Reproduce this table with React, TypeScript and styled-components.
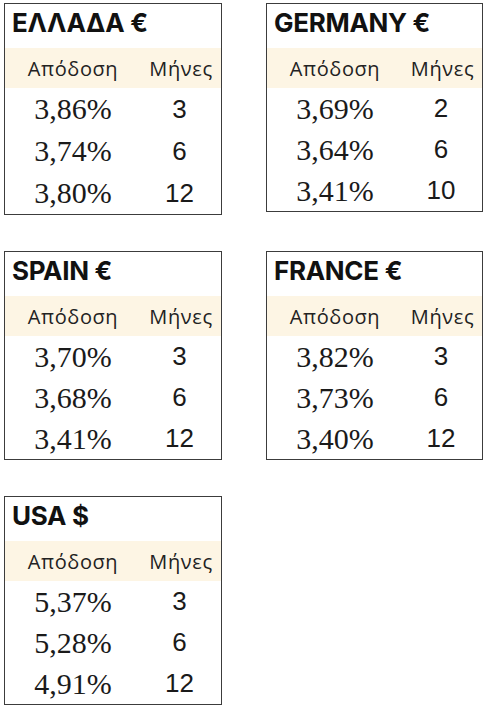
import styled, { createGlobalStyle } from 'styled-components';

const GlobalStyle = createGlobalStyle`
  html, body {
    margin: 0;
    padding: 0;
    background: #ffffff;
  }
`;

const Page = styled.div`
  display: grid;
  grid-template-columns: 218px 217px;
  column-gap: 44px;
  row-gap: 36px;
  align-items: start;
  padding: 3px 0 0 4px;
`;

const Card = styled.div`
  border: 1px solid #3c3c3c;
  background: #ffffff;
  display: flex;
  flex-direction: column;
`;

const Title = styled.div`
  height: 44px;
  box-sizing: border-box;
  display: flex;
  align-items: center;
  padding: 0 0 7px 7px;
  font-family: Inter, "Liberation Sans", sans-serif;
  font-weight: 700;
  font-size: 26px;
  letter-spacing: -0.3px;
  color: #111111;
`;

const Row = styled.div<{ $h: number; $head?: boolean }>`
  display: grid;
  grid-template-columns: 136px 1fr;
  align-items: center;
  height: ${(p) => p.$h}px;
  background: ${(p) => (p.$head ? '#fdf5e4' : 'transparent')};
`;

const HeadCell = styled.div`
  text-align: center;
  font-family: "Open Sans", "Noto Sans", sans-serif;
  font-size: 20px;
  letter-spacing: 0.6px;
  color: #222222;
`;

const Rate = styled.div`
  text-align: center;
  font-family: "Liberation Serif", serif;
  font-size: 30px;
  color: #1a1a1a;
`;

const Months = styled.div`
  text-align: center;
  padding-right: 3px;
  font-family: "Liberation Sans", Arial, sans-serif;
  font-size: 26px;
  color: #1a1a1a;
`;

type Market = {
  name: string;
  rowH: number;
  rows: [string, number][];
};

const markets: Market[] = [
  { name: 'ΕΛΛΑΔΑ €', rowH: 42, rows: [['3,86%', 3], ['3,74%', 6], ['3,80%', 12]] },
  { name: 'GERMANY €', rowH: 41, rows: [['3,69%', 2], ['3,64%', 6], ['3,41%', 10]] },
  { name: 'SPAIN €', rowH: 41, rows: [['3,70%', 3], ['3,68%', 6], ['3,41%', 12]] },
  { name: 'FRANCE €', rowH: 41, rows: [['3,82%', 3], ['3,73%', 6], ['3,40%', 12]] },
  { name: 'USA $', rowH: 41, rows: [['5,37%', 3], ['5,28%', 6], ['4,91%', 12]] },
];

function YieldCard({ market }: { market: Market }) {
  return (
    <Card>
      <Title>{market.name}</Title>
      <Row $h={40} $head>
        <HeadCell>Απόδοση</HeadCell>
        <HeadCell>Μήνες</HeadCell>
      </Row>
      {market.rows.map(([rate, months]) => (
        <Row key={rate + months} $h={market.rowH}>
          <Rate>{rate}</Rate>
          <Months>{months}</Months>
        </Row>
      ))}
    </Card>
  );
}

export default function App() {
  return (
    <>
      <GlobalStyle />
      <Page>
        {markets.map((m) => (
          <YieldCard key={m.name} market={m} />
        ))}
      </Page>
    </>
  );
}
